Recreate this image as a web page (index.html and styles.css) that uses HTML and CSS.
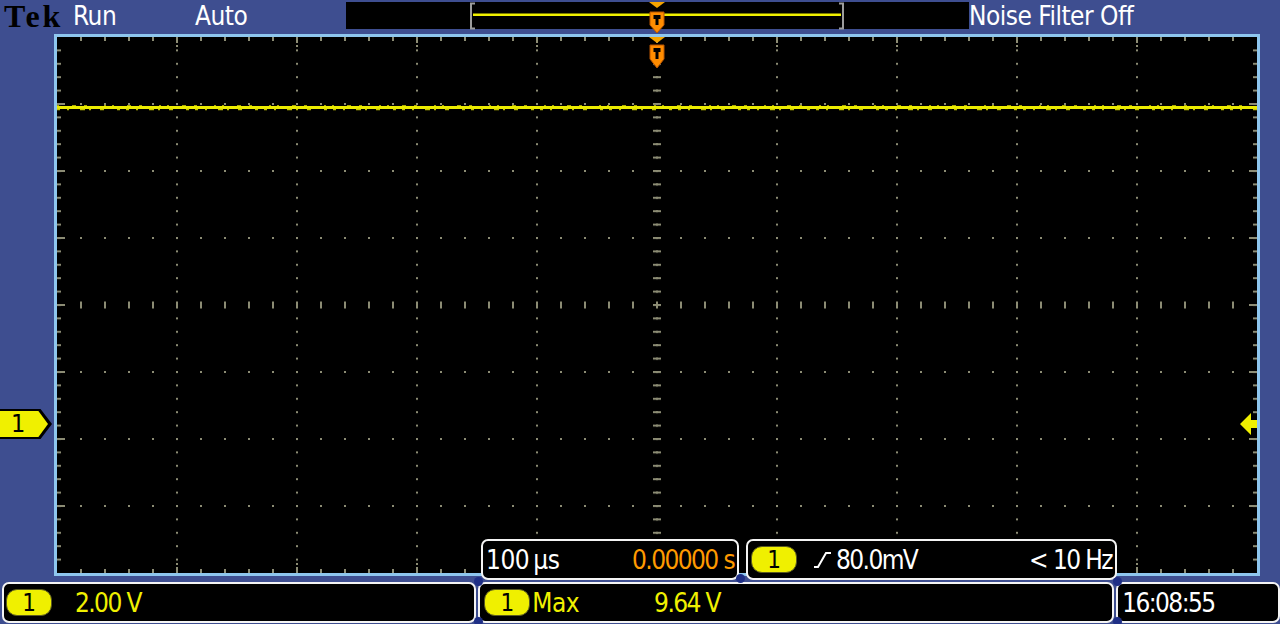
FILE: index.html
```html
<!doctype html>
<html>
<head>
<meta charset="utf-8">
<title>Tek Run</title>
<link rel="stylesheet" href="styles.css">
</head>
<body>
<div class="scope">
	<div class="topbar">
		<div class="cell tek">Tek</div>
		<div class="cell">Run</div>
		<div class="cell">Auto</div>
		<div class="record">
			<svg width="623" height="34" viewBox="0 0 623 34">
				<rect x="0" y="2" width="623" height="27" fill="#000"/>
				<path d="M129 3.5h-4v25h4" stroke="#9c9c9c" stroke-width="2" fill="none"/>
				<path d="M493 3.5h4v25h-4" stroke="#9c9c9c" stroke-width="2" fill="none"/>
				<rect x="127" y="13.5" width="368" height="2.5" fill="#f0f000"/>
				<g transform="translate(303,2)">
					<path d="M0 0h16l-8 6z" fill="#f5a400"/>
					<path d="M1 10h14v13l-7 8l-7-8z" fill="#ff8c00" stroke="#b85400" stroke-width="1"/>
					<path d="M4.5 13h7v4h-2v6h-3v-6h-2z" fill="#000"/>
				</g>
			</svg>
		</div>
		<div class="cell">Noise Filter Off</div>
	</div>

	<div class="screen">
		<div class="side left">
			<div class="ch-marker">1</div>
		</div>
		<div class="graticule">
			<svg width="1200" height="536" viewBox="0 0 1200 536">
				<defs>
					<pattern id="dotsV" width="120" height="13.4" x="-1" y="-1" patternUnits="userSpaceOnUse">
						<rect width="2" height="2" fill="#8c8c74"/>
					</pattern>
					<pattern id="dotsH" width="24" height="67" x="-1" y="-1" patternUnits="userSpaceOnUse">
						<rect width="2" height="2" fill="#8c8c74"/>
					</pattern>
					<pattern id="centerH" width="24" height="536" x="-1" y="0" patternUnits="userSpaceOnUse">
						<rect y="264.5" width="2" height="7" fill="#8c8c74"/>
					</pattern>
					<pattern id="centerV" width="1200" height="13.4" x="0" y="-1" patternUnits="userSpaceOnUse">
						<rect x="596" width="8" height="2" fill="#8c8c74"/>
					</pattern>
					<pattern id="edgeX" width="24" height="536" x="-1" y="0" patternUnits="userSpaceOnUse">
						<rect width="2" height="4" fill="#8c8c74"/>
						<rect y="532" width="2" height="4" fill="#8c8c74"/>
					</pattern>
					<pattern id="edgeXmaj" width="120" height="536" x="-1" y="0" patternUnits="userSpaceOnUse">
						<rect width="2" height="6" fill="#8c8c74"/>
						<rect y="8" width="2" height="2" fill="#8c8c74"/>
						<rect y="530" width="2" height="6" fill="#8c8c74"/>
						<rect y="526" width="2" height="2" fill="#8c8c74"/>
					</pattern>
					<pattern id="edgeY" width="1200" height="13.4" x="0" y="-1" patternUnits="userSpaceOnUse">
						<rect width="4" height="2" fill="#8c8c74"/>
						<rect x="1196" width="4" height="2" fill="#8c8c74"/>
					</pattern>
					<pattern id="edgeYmaj" width="1200" height="67" x="0" y="-1" patternUnits="userSpaceOnUse">
						<rect width="8" height="2" fill="#8c8c74"/>
						<rect x="1192" width="8" height="2" fill="#8c8c74"/>
					</pattern>
				</defs>
				<rect x="60" y="8" width="1080" height="520" fill="url(#dotsV)"/>
				<rect x="12" y="30" width="1176" height="476" fill="url(#dotsH)"/>
				<rect x="12" y="0" width="1176" height="536" fill="url(#centerH)"/>
				<rect x="0" y="8" width="1200" height="520" fill="url(#centerV)"/>
				<rect x="12" y="0" width="1176" height="536" fill="url(#edgeX)"/>
				<rect x="60" y="0" width="1080" height="536" fill="url(#edgeXmaj)"/>
				<rect x="0" y="8" width="1200" height="520" fill="url(#edgeY)"/>
				<rect x="0" y="30" width="1200" height="476" fill="url(#edgeYmaj)"/>

				<!-- channel 1 trace -->
				<line x1="0" y1="70.5" x2="1200" y2="70.5" stroke="#ecec00" stroke-width="3"/>
				<line x1="0" y1="72.5" x2="1200" y2="72.5" stroke="#c8c800" stroke-width="1.5" stroke-dasharray="3 7 2 11 5 4 2 9 4 13 3 6"/>
				<line x1="0" y1="68.5" x2="1200" y2="68.5" stroke="#a8a800" stroke-width="1" stroke-dasharray="2 13 4 8 3 17 2 6"/>

				<!-- trigger position -->
				<g transform="translate(592,0)">
					<path d="M0 0h16l-8 6z" fill="#f5a400"/>
					<path d="M1 8h14v14l-7 9l-7-9z" fill="#ff8c00" stroke="#b85400" stroke-width="1"/>
					<path d="M4.5 11h7v4h-2v7h-3v-7h-2z" fill="#000"/>
				</g>

				<!-- trigger level -->
				<path d="M1183 387l11-11v7h6v8h-6v7z" fill="#f0f000"/>
			</svg>
		</div>
		<div class="side right"></div>

		<div class="readout horiz">
			<span class="white">100&thinsp;µs</span>
			<span class="orange num">0.00000 s</span>
		</div>
		<div class="readout trig">
			<span class="pill">1</span>
			<svg class="edge" width="20" height="20" viewBox="0 0 20 20">
				<polyline points="1,17 5,17 13,3 18,3" fill="none" stroke="#fff" stroke-width="2"/>
			</svg>
			<span class="white num level">80.0mV</span>
			<span class="white num freq">&lt; 10 Hz</span>
		</div>
		<span class="joint" style="left:736px;top:540px"></span>
	</div>

	<div class="bottom">
		<div class="box vert">
			<span class="pill">1</span>
			<span class="yellow num volts">2.00 V</span>
		</div>
		<div class="box meas">
			<span class="pill">1</span>
			<span class="yellow">Max</span>
			<span class="yellow num value">9.64 V</span>
		</div>
		<div class="box clock">
			<span class="white num">16:08:55</span>
		</div>
		<span class="joint" style="left:474px;top:-5px"></span>
		<span class="joint" style="left:474px;top:35px"></span>
		<span class="joint" style="left:1113px;top:-5px"></span>
		<span class="joint" style="left:1113px;top:35px"></span>
	</div>
</div>
</body>
</html>
```

FILE: styles.css
```css
*{
	margin:0px;
	padding:0px;
	box-sizing:border-box;
}
body{
	width:1280px;
	height:624px;
	overflow:hidden;
	background:#3e4e90;
	font-family:"Liberation Sans Narrow","DejaVu Sans Condensed","Liberation Sans",sans-serif;
	font-size:26px;
	letter-spacing:-0.5px;
	color:#fff;
}
.scope{
	position:relative;
	height:624px;
}

/* top status line */
.topbar{
	display:grid;
	grid-template-columns:73px 122px 151px 623px auto;
	height:34px;
	align-items:start;
}
.cell{
	line-height:32px;
	white-space:nowrap;
}
.tek{
	font-family:"Liberation Serif",serif;
	font-weight:bold;
	font-size:32px;
	color:#000;
	padding-left:4px;
	letter-spacing:3px;
	line-height:32px;
}
.record svg{display:block;}

/* graticule row */
.screen{
	position:relative;
	display:flex;
	height:542px;
}
.side{
	position:relative;
	flex:none;
}
.side.left{width:54px;}
.side.right{width:20px;}
.graticule{
	width:1206px;
	height:542px;
	border:3px solid #8ec6ee;
	background:#000;
	flex:none;
}
.graticule svg{display:block;}

.ch-marker{
	position:absolute;
	left:0px;
	top:375px;
	width:52px;
	height:30px;
	background:#000;
	color:#000;
	line-height:30px;
	padding-left:11px;
	font-size:25px;
	isolation:isolate;
	clip-path:polygon(0 0,78% 0,100% 50%,78% 100%,0 100%);
}
.ch-marker::before{
	content:"";
	position:absolute;
	left:0px;
	top:2px;
	width:48px;
	height:26px;
	background:#f0f000;
	z-index:-1;
	clip-path:polygon(0 0,80% 0,100% 50%,80% 100%,0 100%);
}

/* readouts */
.readout,
.box{
	background:#000;
	border:2px solid #f4f4f4;
	border-radius:7px;
	display:flex;
	align-items:center;
	white-space:nowrap;
}
.readout{
	position:absolute;
	top:505px;
	height:41px;
}
.readout.horiz{
	left:481px;
	width:258px;
	padding:0 3px 0 3px;
	justify-content:space-between;
}
.readout.trig{
	left:746px;
	width:371px;
	padding:0 3px 0 3px;
}
.edge{
	margin-left:16px;
	flex:none;
}
.level{margin-left:3px;}
.freq{margin-left:auto;}
.num{letter-spacing:-1.6px;}

.bottom{
	position:relative;
	display:flex;
	margin-top:6px;
	padding-left:2px;
}
.box{
	height:41px;
	padding:0 2px;
}
.box.vert{width:475px;}
.box.meas{width:637px;margin-left:2px;padding-left:4px;}
.box.clock{width:164px;margin-left:2px;padding-left:4px;}
.volts{margin-left:23px;}
.value{margin-left:75px;}

/* navy pins where the readout frames meet */
.joint{
	position:absolute;
	width:9px;
	height:9px;
	border-radius:50%;
	background:#1f2f86;
	z-index:2;
}

.pill{
	display:inline-block;
	width:46px;
	height:27px;
	line-height:27px;
	border-radius:11px;
	background:#f0f000;
	border:1px solid #5a5a20;
	color:#000;
	text-align:center;
	font-size:24px;
	letter-spacing:0;
	flex:none;
}
.meas .pill{margin-right:2px;}
.white{color:#fff;}
.yellow{color:#f0f000;}
.orange{color:#ff9a00;}
```
